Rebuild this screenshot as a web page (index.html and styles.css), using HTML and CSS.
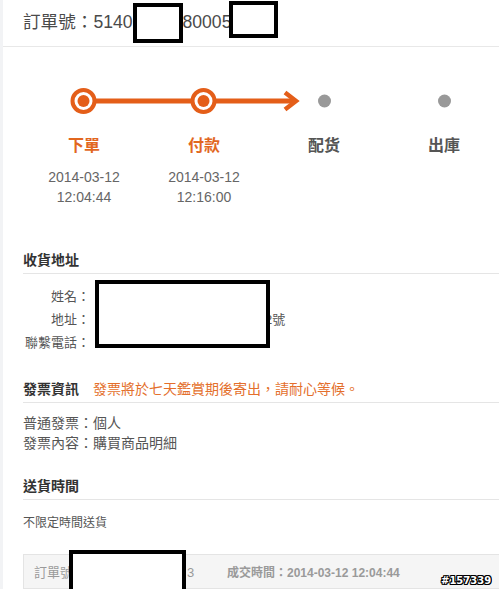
FILE: index.html
```html
<!DOCTYPE html>
<html lang="zh-Hant">
<head>
<meta charset="utf-8">
<title>訂單詳情</title>
<link rel="stylesheet" href="styles.css">
</head>
<body>
<div class="page">
  <header class="order-head">
    <span class="hd-text">訂單號：5140</span><span class="redact r1"></span><span class="hd-text">80005</span><span class="redact r2"></span>
  </header>

  <section class="progress">
    <svg class="track" width="480" height="26" viewBox="0 0 480 26">
      <line x1="60" y1="13" x2="269" y2="13" stroke="#e45e19" stroke-width="5"/>
      <polyline points="261,4.5 272,13 261,21.5" fill="none" stroke="#e45e19" stroke-width="4.5"/>
      <circle cx="59.5" cy="13" r="11" fill="#fff" stroke="#e45e19" stroke-width="4"/>
      <circle cx="59.5" cy="13" r="6" fill="#e45e19"/>
      <circle cx="179.5" cy="13" r="11" fill="#fff" stroke="#e45e19" stroke-width="4"/>
      <circle cx="179.5" cy="13" r="6" fill="#e45e19"/>
      <circle cx="300.5" cy="13" r="6.5" fill="#999"/>
      <circle cx="420.5" cy="13" r="6.5" fill="#999"/>
    </svg>
    <div class="steps">
      <div class="step done">
        <div class="step-name">下單</div>
        <div class="step-time">2014-03-12<br>12:04:44</div>
      </div>
      <div class="step done">
        <div class="step-name">付款</div>
        <div class="step-time">2014-03-12<br>12:16:00</div>
      </div>
      <div class="step">
        <div class="step-name">配货</div>
      </div>
      <div class="step">
        <div class="step-name">出庫</div>
      </div>
    </div>
  </section>

  <section class="block first">
    <h2 class="block-title">收貨地址</h2>
    <div class="block-body addr">
      <div class="addr-row"><span class="addr-label">姓名：</span><span class="addr-val"></span></div>
      <div class="addr-row"><span class="addr-label">地址：</span><span class="addr-val tail">2號</span></div>
      <div class="addr-row"><span class="addr-label">聯繫電話：</span><span class="addr-val"></span></div>
      <span class="redact r3"></span>
    </div>
  </section>

  <section class="block">
    <h2 class="block-title">發票資訊<span class="note">發票將於七天鑑賞期後寄出，請耐心等候。</span></h2>
    <div class="block-body invoice">
      <div>普通發票：個人</div>
      <div>發票內容：購買商品明細</div>
    </div>
  </section>

  <section class="block">
    <h2 class="block-title">送貨時間</h2>
    <div class="block-body delivery">不限定時間送貨</div>
  </section>

  <div class="order-table">
    <div class="ot-head">
      <span class="ot-no">訂單號：<span class="ot-tail">3</span></span>
      <span class="ot-time">成交時間：2014-03-12 12:04:44</span>
    </div>
    <div class="ot-row">
      <span class="ot-cell c1"></span><span class="ot-cell c2"></span><span class="ot-cell c3"></span><span class="ot-cell c4"></span>
    </div>
    <span class="redact r4"></span>
  </div>

  <span class="watermark">#157339</span>
</div>
</body>
</html>
```

FILE: styles.css
```css
* { box-sizing: border-box; }

html, body {
  margin: 0;
  padding: 0;
  background: #fff;
}

body {
  font-family: "Liberation Sans", "Noto Sans CJK TC", sans-serif;
  color: #555;
}

.page {
  position: relative;
  width: 499px;
  height: 589px;
  overflow: hidden;
  border-left: 3px solid #f2f3f5;
}

.order-head {
  display: flex;
  align-items: flex-start;
  height: 47px;
  padding-left: 20px;
  border-bottom: 1px solid #e8e8e8;
  font-size: 17.6px;
  color: #4a4a4a;
  white-space: nowrap;
}

.hd-text {
  line-height: 45px;
}

.redact {
  display: block;
  background: #fff;
  border: 4px solid #000;
}

.r1 {
  width: 50px;
  height: 40px;
  margin-top: 3px;
}

.r2 {
  width: 49px;
  height: 37px;
  margin-top: 1px;
  margin-left: -2px;
}

.progress {
  padding: 41px 0 0 21px;
}

.track {
  display: block;
}

.steps {
  display: grid;
  grid-template-columns: repeat(4, 120px);
  margin-top: 22px;
  text-align: center;
}

.step-name {
  font-size: 16px;
  line-height: 20px;
  font-weight: bold;
  color: #555;
}

.step.done .step-name {
  color: #e2671f;
}

.step-time {
  margin-top: 11px;
  font-size: 14px;
  line-height: 20px;
  color: #666;
}

.block {
  margin: 22px 0 0 20px;
}

.block.first {
  margin-top: 40px;
}

.block-title {
  margin: 0;
  height: 27px;
  line-height: 26px;
  font-size: 14px;
  font-weight: bold;
  color: #333;
  border-bottom: 1px solid #e5e5e5;
  display: flex;
  gap: 14px;
}

.note {
  font-weight: normal;
  color: #e46f2c;
}

.addr {
  position: relative;
  padding-top: 11px;
  font-size: 13px;
  line-height: 23px;
  color: #555;
}

.addr-row {
  display: grid;
  grid-template-columns: 67px 1fr;
}

.addr-label {
  text-align: right;
}

.addr-val.tail {
  padding-left: 175px;
}

.r3 {
  position: absolute;
  left: 72px;
  top: 6px;
  width: 175px;
  height: 68px;
}

.invoice {
  padding-top: 10px;
  font-size: 14px;
  line-height: 20px;
  color: #555;
}

.block + .block + .block {
  margin-top: 20px;
}

.delivery {
  padding-top: 13px;
  font-size: 12px;
  line-height: 20px;
  color: #555;
}

.order-table {
  position: relative;
  margin: 21px 0 0 20px;
  border: 1px solid #e4e4e4;
  border-right: none;
}

.ot-head {
  display: flex;
  height: 34px;
  align-items: center;
  padding-left: 10px;
  background: #f5f5f5;
  border-bottom: 1px solid #e4e4e4;
  font-size: 12px;
  font-weight: bold;
  color: #9a9a9a;
  white-space: nowrap;
}

.ot-no {
  width: 193px;
  font-weight: normal;
  font-size: 13px;
}

.ot-tail {
  padding-left: 101px;
}

.ot-row {
  display: flex;
  height: 30px;
}

.ot-cell {
  border-right: 1px solid #e4e4e4;
}

.c1 { width: 195px; }
.c2 { width: 91px; }
.c3 { width: 80px; }
.c4 { width: 80px; }

.r4 {
  position: absolute;
  left: 45px;
  top: -5px;
  width: 117px;
  height: 45px;
}

.watermark {
  position: absolute;
  left: 438px;
  top: 575px;
  font-family: "DejaVu Sans", sans-serif;
  font-size: 10px;
  font-weight: bold;
  line-height: 12px;
  color: #fff;
  text-shadow: 1px 0 #000, -1px 0 #000, 0 1px #000, 0 -1px #000, 1px 1px #000, -1px -1px #000, 1px -1px #000, -1px 1px #000;
}
```
